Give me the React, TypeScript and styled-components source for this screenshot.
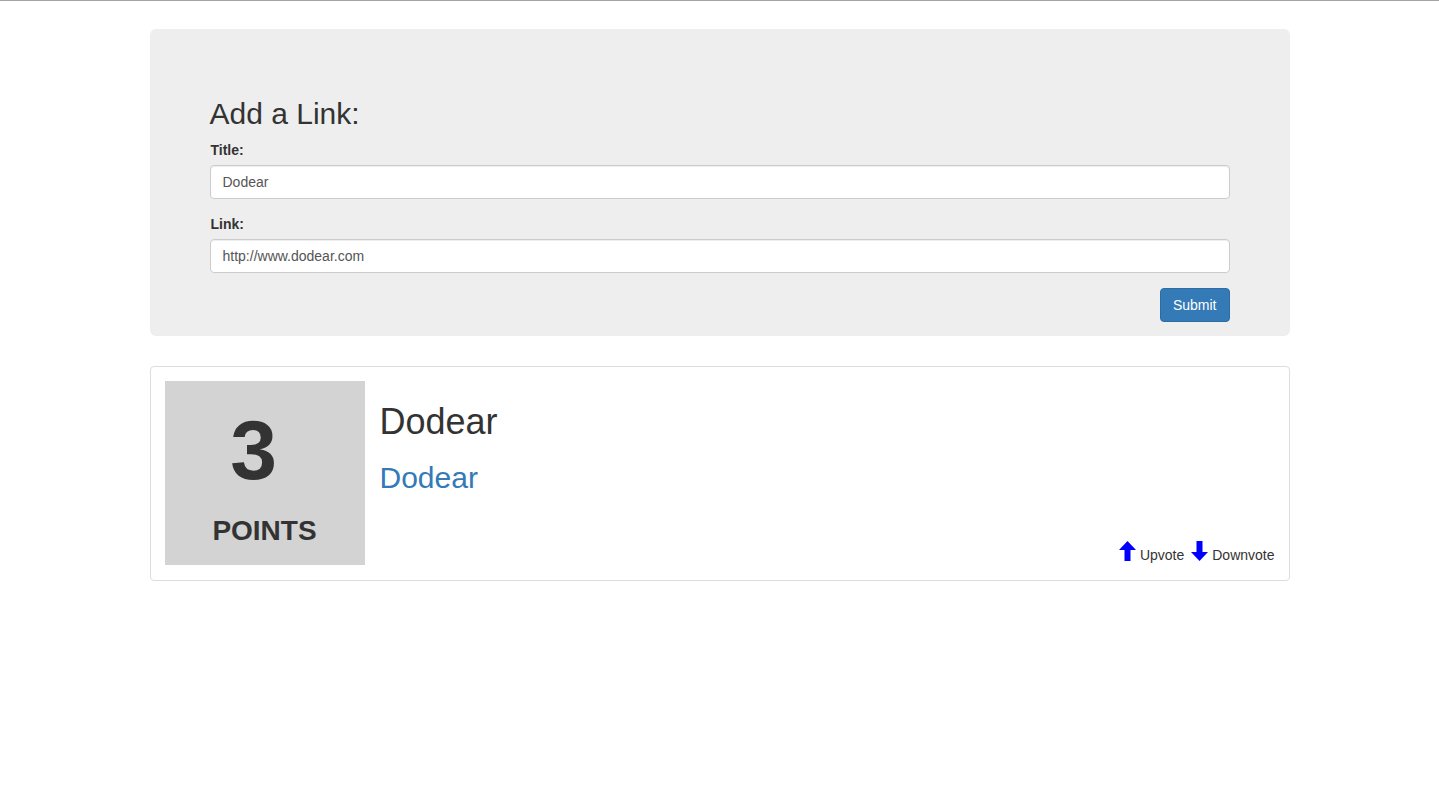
import React from "react";
import styled, { createGlobalStyle } from "styled-components";

const Global = createGlobalStyle`
  html, body { margin: 0; padding: 0; background: #fff; }
  body {
    font-family: "Liberation Sans", Arial, sans-serif;
    font-size: 14px;
    line-height: 20px;
    color: #333;
  }
  * { box-sizing: border-box; }
`;

const TopRule = styled.div`
  height: 1px;
  background: #a3a3a3;
`;

const Container = styled.div`
  width: 1140px;
  margin: 28px auto 0;
`;

const Jumbotron = styled.section`
  background: #eee;
  border-radius: 6px;
  padding: 68px 60px 14px;
  margin-bottom: 30px;
`;

const Heading = styled.h2`
  margin: 0 0 10px;
  font-size: 30px;
  font-weight: 400;
  line-height: 33px;
  color: #333;
`;

const FormGroup = styled.div`
  margin-bottom: 15px;
`;

const Label = styled.label`
  display: block;
  font-weight: 700;
  margin-bottom: 5px;
  padding-left: 1px;
  line-height: 20px;
`;

const Input = styled.input`
  display: block;
  width: 100%;
  height: 34px;
  padding: 6px 12px;
  font-family: inherit;
  font-size: 14px;
  line-height: 20px;
  color: #555;
  background: #fff;
  border: 1px solid #ccc;
  border-radius: 4px;
  box-shadow: inset 0 1px 1px rgba(0, 0, 0, 0.075);
  outline: none;
`;

const Actions = styled.div`
  display: flex;
  justify-content: flex-end;
`;

const Button = styled.button`
  height: 34px;
  padding: 6px 12px;
  font-family: inherit;
  font-size: 14px;
  line-height: 20px;
  color: #fff;
  background: #337ab7;
  border: 1px solid #2e6da4;
  border-radius: 4px;
  cursor: pointer;
`;

const Card = styled.article`
  display: flex;
  gap: 15px;
  border: 1px solid #ddd;
  border-radius: 4px;
  padding: 14px 14px 15px;
`;

const PointsBox = styled.div`
  width: 200px;
  height: 184px;
  flex: none;
  background: #d3d3d3;
  display: flex;
  flex-direction: column;
  align-items: center;
  padding-top: 22px;
`;

const Number = styled.div`
  font-size: 84px;
  font-weight: 700;
  line-height: 94px;
  color: #333;
  padding-right: 22px;
`;

const PointsLabel = styled.div`
  margin-top: 19px;
  font-size: 28px;
  font-weight: 700;
  line-height: 30px;
  color: #333;
`;

const Body = styled.div`
  flex: 1;
  display: flex;
  flex-direction: column;
`;

const Title = styled.h1`
  margin: 21px 0 19px;
  font-size: 36px;
  font-weight: 400;
  line-height: 39.6px;
  color: #333;
`;

const LinkText = styled.a`
  font-size: 30px;
  line-height: 33px;
  color: #337ab7;
  text-decoration: none;
`;

const Votes = styled.div`
  margin-top: auto;
  display: flex;
  justify-content: flex-end;
  gap: 7px;
  line-height: 20px;
`;

const Vote = styled.span`
  display: inline-flex;
  align-items: flex-end;
  gap: 4px;
  color: #333;
  cursor: pointer;
`;

const ArrowSvg = styled.svg<{ $down?: boolean }>`
  display: block;
  margin-bottom: 4px;
  transform: ${(p) => (p.$down ? "rotate(180deg)" : "none")};
`;

const Arrow = ({ down }: { down?: boolean }) => (
  <ArrowSvg $down={down} width="17" height="20" viewBox="0 0 17 20">
    <path d="M8.5 0 L17 9 L11.5 9 L11.5 20 L5.5 20 L5.5 9 L0 9 Z" fill="#0000ff" />
  </ArrowSvg>
);

export default function App() {
  return (
    <>
      <Global />
      <TopRule />
      <Container>
        <Jumbotron>
          <Heading>Add a Link:</Heading>
          <FormGroup>
            <Label>Title:</Label>
            <Input defaultValue="Dodear" />
          </FormGroup>
          <FormGroup>
            <Label>Link:</Label>
            <Input defaultValue="http://www.dodear.com" />
          </FormGroup>
          <Actions>
            <Button>Submit</Button>
          </Actions>
        </Jumbotron>
        <Card>
          <PointsBox>
            <Number>3</Number>
            <PointsLabel>POINTS</PointsLabel>
          </PointsBox>
          <Body>
            <Title>Dodear</Title>
            <LinkText href="#">Dodear</LinkText>
            <Votes>
              <Vote>
                <Arrow />
                Upvote
              </Vote>
              <Vote>
                <Arrow down />
                Downvote
              </Vote>
            </Votes>
          </Body>
        </Card>
      </Container>
    </>
  );
}
